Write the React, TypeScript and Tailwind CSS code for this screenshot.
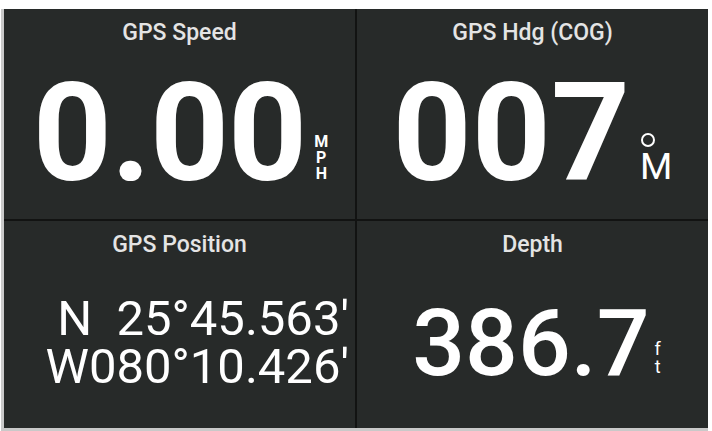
const font = { fontFamily: "Roboto, 'Liberation Sans', sans-serif" };

type CellProps = {
  title: string;
  children: React.ReactNode;
};

function Cell({ title, children }: CellProps) {
  return (
    <div className="flex flex-col bg-[#272a29] min-h-0">
      <div className="pt-[10px] h-[37px] text-center text-[23px] leading-[27px] font-medium text-[#e4e4e4]">
        {title}
      </div>
      <div className="flex-1 flex items-center justify-center">{children}</div>
    </div>
  );
}

export default function App() {
  return (
    <div className="w-[712px] h-[431px] bg-white pt-[9px] pl-[1px] pr-[4px]" style={font}>
      <div className="h-[422px] border-l-[3px] border-b-[3px] border-[#c9c9c9] bg-[#121312]">
        <div className="grid grid-cols-2 grid-rows-[210px_207px] gap-[2px] h-[419px]">
          <Cell title="GPS Speed">
            <div className="flex items-end gap-[8px] pl-[2px]">
              <span className="text-[138px] leading-none font-bold text-white tracking-[-1px]">0.00</span>
              <div className="flex flex-col items-center mb-[20px] text-[16px] leading-[16px] font-bold text-white">
                <span>M</span>
                <span>P</span>
                <span>H</span>
              </div>
            </div>
          </Cell>
          <Cell title="GPS Hdg (COG)">
            <div className="flex items-end gap-[10px]">
              <span className="text-[138px] leading-none font-bold text-white">007</span>
              <div className="flex flex-col items-start mb-[20px]">
                <div className="w-[14px] h-[14px] rounded-full border-[2.5px] border-white ml-[1px] mb-[5px]" />
                <span className="text-[37px] leading-[30px] font-normal text-white">M</span>
              </div>
            </div>
          </Cell>
          <Cell title="GPS Position">
            <div className="w-full flex justify-end pr-[6px]">
              <div className="text-right text-[49px] leading-[48px] text-white whitespace-pre">
                <div>{"N  25°45.563'"}</div>
                <div>{"W080°10.426'"}</div>
              </div>
            </div>
          </Cell>
          <Cell title="Depth">
            <div className="flex items-end gap-[5px] pl-[8px]">
              <span className="text-[93px] leading-none font-medium text-white">386.7</span>
              <div className="flex flex-col items-center mb-[14px] text-[18px] leading-[18px] text-white">
                <span>f</span>
                <span>t</span>
              </div>
            </div>
          </Cell>
        </div>
      </div>
    </div>
  );
}
